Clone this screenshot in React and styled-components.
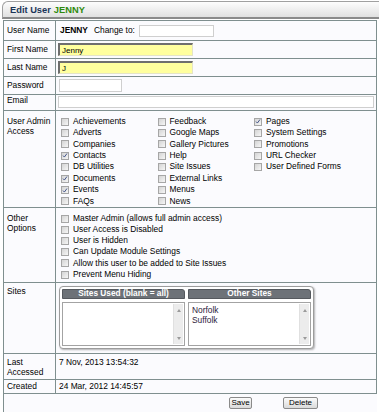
import styled, { createGlobalStyle } from "styled-components";

const line = "#7f8f8f";

const GlobalStyle = createGlobalStyle`
  *, *::before, *::after { box-sizing: border-box; }
  html, body { margin: 0; background: #fff; }
  body {
    font-family: "Liberation Sans", Arial, sans-serif;
    font-size: 8.4px;
    color: #000;
  }
  #root { width: 379px; height: 412px; overflow: hidden; }
`;

const Page = styled.div`
  padding-top: 1px;
`;

const Header = styled.div`
  height: 18px;
  margin-left: 2px;
  padding-left: 7px;
  display: flex;
  align-items: center;
  gap: 3px;
  border: 1px solid #a0a0a0;
  border-right: 0;
  border-bottom: 2px solid #8a8a8a;
  border-radius: 6px 0 0 0;
  background: linear-gradient(#fdfdfd, #e0e0e0);
  font-weight: bold;
  font-size: 9.3px;
  color: #1a3558;
`;

const Green = styled.span`
  color: #2f8a0c;
`;

const Form = styled.div`
  margin: 1px 2px 0 3px;
  border-left: 1px solid ${line};
  border-top: 1px solid ${line};
  background: #fbfbfe;
`;

const Row = styled.div`
  display: grid;
  grid-template-columns: 52px 321px;
  height: ${(p) => p.h}px;
`;

const Label = styled.div`
  padding: ${(p) => p.pt ?? 4}px 3px 0;
  line-height: 9.6px;
  border-right: 1px solid ${line};
  border-bottom: 1px solid ${line};
`;

const Value = styled.div`
  display: flex;
  align-items: ${(p) => (p.top ? "flex-start" : "center")};
  padding: ${(p) => p.pad || "0 2px"};
  border-right: 1px solid ${line};
  border-bottom: 1px solid ${line};
  line-height: 9.6px;
`;

const Strong = styled.b`
  margin: 0 6px 0 1px;
`;

const TextInput = styled.input`
  width: ${(p) => p.w}px;
  height: ${(p) => p.h}px;
  margin-left: ${(p) => p.ml || 0}px;
  padding: 0 2px;
  font: 8px "Liberation Sans", Arial, sans-serif;
  color: #000;
  background: #fff;
  border: 1px solid #cfcfcf;
  outline: none;
`;

const NameInput = styled(TextInput)`
  background: #ffff9e;
  border-top: 2px solid #6e6e6e;
  border-left: 2px solid #6e6e6e;
  border-right: 1px solid #e4e4c8;
  border-bottom: 1px solid #e4e4c8;
`;

const CheckGrid = styled.div`
  display: grid;
  grid-template-columns: repeat(3, 96.5px);
  grid-template-rows: repeat(${(p) => p.rows}, ${(p) => p.step}px);
  grid-auto-flow: column;
`;

const Option = styled.div`
  display: flex;
  align-items: center;
  gap: 4px;
  white-space: nowrap;
`;

const Box = styled.span`
  flex: none;
  width: 8px;
  height: 8px;
  display: flex;
  align-items: center;
  justify-content: center;
  border: 1px solid #a6a6a6;
  background: linear-gradient(135deg, #d4d4d4, #f6f6f6);
`;

const Picker = styled.div`
  display: grid;
  grid-template-columns: 123px 123px;
  grid-template-rows: 10px 44px;
  column-gap: 3px;
  row-gap: 3px;
  padding: 2px;
  border: 1px solid #9c9c9c;
  border-radius: 4px;
  background: #fff;
  box-shadow: inset 0 0 0 1px #fff, 1px 1px 2px rgba(0, 0, 0, 0.3);
`;

const PickerHead = styled.div`
  display: flex;
  align-items: center;
  justify-content: center;
  background: #6d7278;
  border: 1px solid #55595e;
  border-radius: 0 3px 0 0;
  color: #fff;
  font-weight: bold;
  font-size: 8.3px;
`;

const ListBox = styled.div`
  display: flex;
  border: 1px solid #a3a3a3;
  background: #fff;
`;

const ListItems = styled.div`
  flex: 1;
  padding: 2px 3px;
  line-height: 10.4px;
  color: #2d1b3c;
`;

const Scroll = styled.div`
  width: 10px;
  margin: 1px 1px 1px 0;
  display: flex;
  flex-direction: column;
  justify-content: space-between;
  align-items: center;
  padding: 5px 0 4px;
  background: #ececec;
  border-left: 1px solid #e0e0e0;
`;

const Arrow = styled.span`
  width: 0;
  height: 0;
  border-left: 2.5px solid transparent;
  border-right: 2.5px solid transparent;
  ${(p) => (p.down ? "border-top" : "border-bottom")}: 3px solid #9a9a9a;
`;

const Actions = styled.div`
  height: 18px;
  display: flex;
  align-items: flex-start;
  gap: 31px;
  padding: 3px 0 0 225px;
`;

const Button = styled.button`
  width: ${(p) => p.w}px;
  height: 12px;
  padding: 0;
  font: 8px "Liberation Sans", Arial, sans-serif;
  line-height: 10px;
  color: #000;
  border: 1px solid #8a8a8a;
  border-radius: 2px;
  background: linear-gradient(#fbfbfb, #dadada);
`;

const Check = ({ on }) => (
  <Box>
    {on && (
      <svg width="7" height="7" viewBox="0 0 7 7">
        <path d="M1.2 3.6 L2.8 5.3 L5.8 1.2" fill="none" stroke="#3d4f86" strokeWidth="1.1" />
      </svg>
    )}
  </Box>
);

const admin = [
  ["Achievements"], ["Adverts"], ["Companies"], ["Contacts", 1], ["DB Utilities"],
  ["Documents", 1], ["Events", 1], ["FAQs"],
  ["Feedback"], ["Google Maps"], ["Gallery Pictures"], ["Help"], ["Site Issues"],
  ["External Links"], ["Menus"], ["News"],
  ["Pages", 1], ["System Settings"], ["Promotions"], ["URL Checker"], ["User Defined Forms"],
];

const other = [
  "Master Admin (allows full admin access)",
  "User Access is Disabled",
  "User is Hidden",
  "Can Update Module Settings",
  "Allow this user to be added to Site Issues",
  "Prevent Menu Hiding",
];

export default function App() {
  return (
    <Page>
      <GlobalStyle />
      <Header>
        Edit User <Green>JENNY</Green>
      </Header>
      <Form>
        <Row h={20}>
          <Label pt={5}>User Name</Label>
          <Value pad="0 2px 0 3px">
            <Strong>JENNY</Strong>
            Change to:
            <TextInput w={75} h={12} ml={4} />
          </Value>
        </Row>
        <Row h={18}>
          <Label>First Name</Label>
          <Value>
            <NameInput w={135} h={13} defaultValue="Jenny" />
          </Value>
        </Row>
        <Row h={18}>
          <Label>Last Name</Label>
          <Value>
            <NameInput w={135} h={13} defaultValue="J" />
          </Value>
        </Row>
        <Row h={18}>
          <Label>Password</Label>
          <Value pad="0 2px 0 3px">
            <TextInput w={63} h={13} type="password" />
          </Value>
        </Row>
        <Row h={16}>
          <Label pt={1}>Email</Label>
          <Value pad="0 1px 2px 2px">
            <TextInput w={316} h={12} />
          </Value>
        </Row>
        <Row h={97}>
          <Label pt={6}>User Admin Access</Label>
          <Value top pad="5px 0 0 5px">
            <CheckGrid rows={8} step={11.4}>
              {admin.map(([name, on]) => (
                <Option key={name}>
                  <Check on={on} />
                  {name}
                </Option>
              ))}
            </CheckGrid>
          </Value>
        </Row>
        <Row h={75}>
          <Label pt={6}>Other Options</Label>
          <Value top pad="5px 0 0 5px">
            <CheckGrid rows={6} step={11.2}>
              {other.map((name) => (
                <Option key={name}>
                  <Check />
                  {name}
                </Option>
              ))}
            </CheckGrid>
          </Value>
        </Row>
        <Row h={71}>
          <Label>Sites</Label>
          <Value top pad="3px 0 0 3px">
            <Picker>
              <PickerHead>Sites Used (blank = all)</PickerHead>
              <PickerHead>Other Sites</PickerHead>
              <ListBox>
                <ListItems />
                <Scroll>
                  <Arrow />
                  <Arrow down />
                </Scroll>
              </ListBox>
              <ListBox>
                <ListItems>
                  Norfolk
                  <br />
                  Suffolk
                </ListItems>
                <Scroll>
                  <Arrow />
                  <Arrow down />
                </Scroll>
              </ListBox>
            </Picker>
          </Value>
        </Row>
        <Row h={26}>
          <Label>Last Accessed</Label>
          <Value top pad="4px 2px 0 3px">
            7 Nov, 2013 13:54:32
          </Value>
        </Row>
        <Row h={14}>
          <Label pt={2}>Created</Label>
          <Value top pad="2px 2px 0 3px">
            24 Mar, 2012 14:45:57
          </Value>
        </Row>
        <Actions>
          <Button w={23}>Save</Button>
          <Button w={35}>Delete</Button>
        </Actions>
      </Form>
    </Page>
  );
}
